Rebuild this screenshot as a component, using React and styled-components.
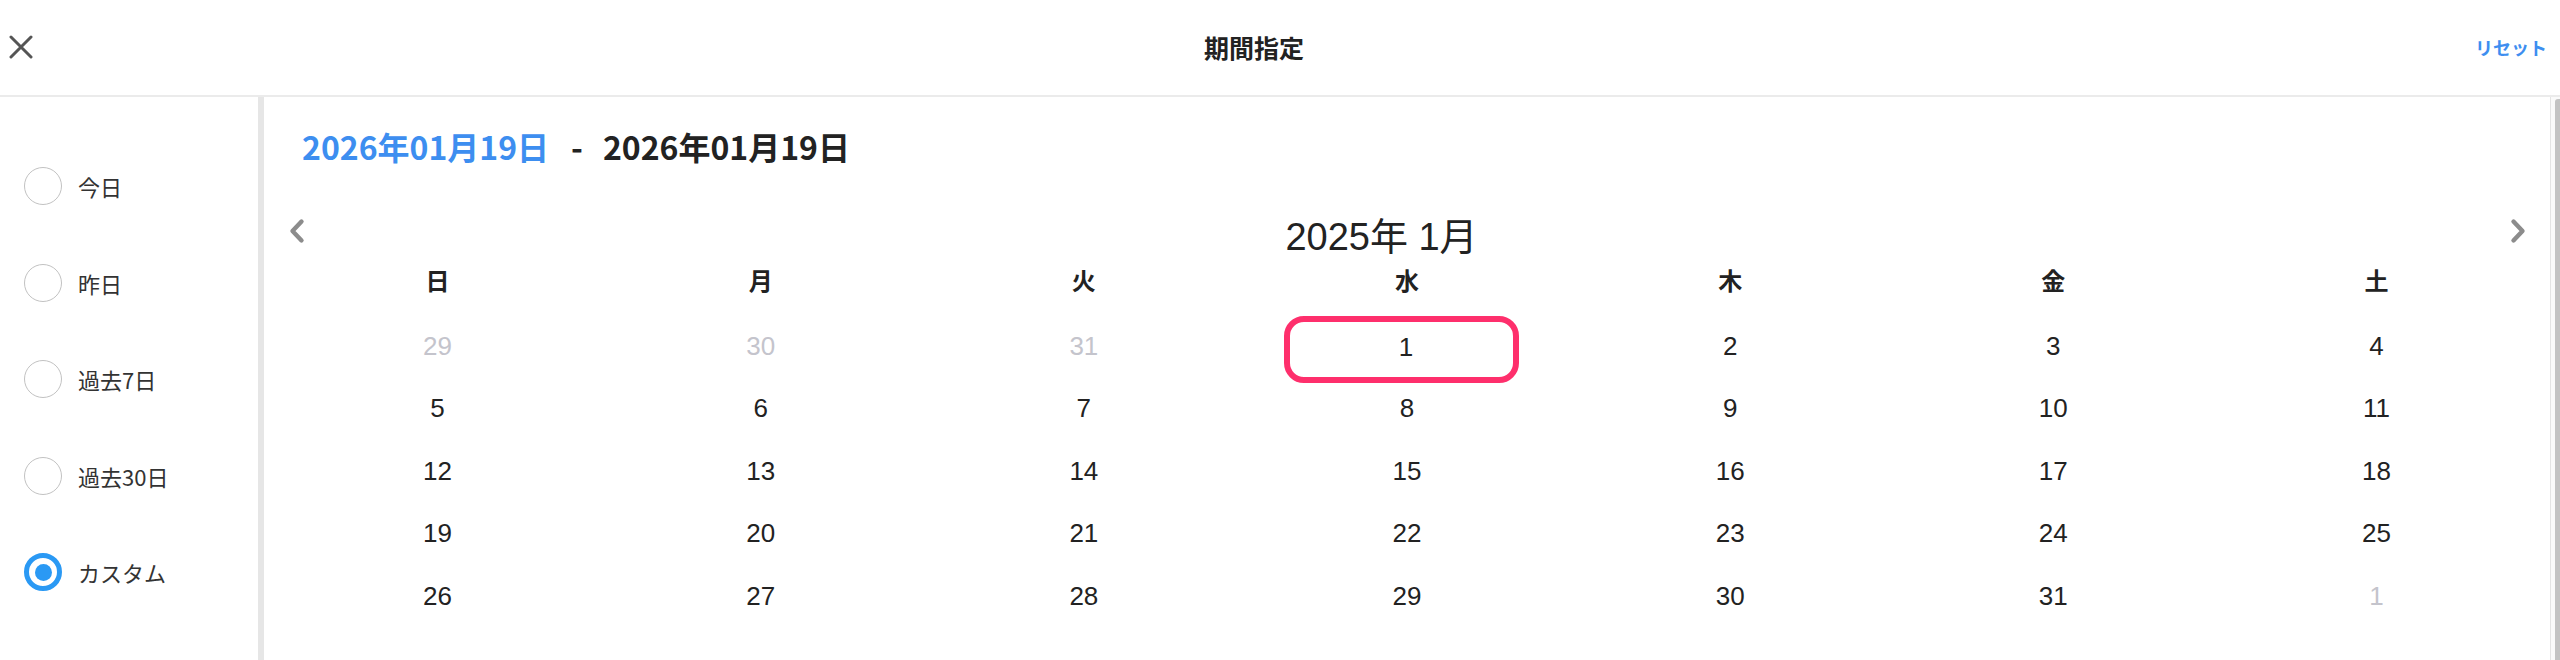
import React from "react";
import styled, { createGlobalStyle } from "styled-components";

const presets = ["今日", "昨日", "過去7日", "過去30日", "カスタム"];
const weekdays = ["日", "月", "火", "水", "木", "金", "土"];

// 2025年1月 — 5 weeks starting Sun 2024/12/29
const days = [
  ...[29, 30, 31].map((d) => ({ day: d, muted: true })),
  ...Array.from({ length: 31 }, (_, i) => ({ day: i + 1, marked: i === 0 })),
  { day: 1, muted: true },
];

function App() {
  return (
    <>
      <GlobalStyle />
      <Page>
        <Header>
          <CloseButton aria-label="閉じる">
            <svg width="24" height="24" viewBox="0 0 24 24">
              <path d="M2 2L22 22M22 2L2 22" stroke="#555" strokeWidth="3" strokeLinecap="round" />
            </svg>
          </CloseButton>
          <Title>期間指定</Title>
          <ResetButton>リセット</ResetButton>
        </Header>
        <Main>
          <Sidebar>
            {presets.map((label, i) => (
              <Option key={label}>
                <Radio $checked={i === presets.length - 1} />
                <OptionLabel>{label}</OptionLabel>
              </Option>
            ))}
          </Sidebar>
          <Panel>
            <Content>
              <Range>
                <RangeDate $active>2026年01月19日</RangeDate>
                <Dash>-</Dash>
                <RangeDate>2026年01月19日</RangeDate>
              </Range>
              <Calendar>
                <Nav>
                  <Arrow aria-label="前の月">
                    <svg width="16" height="26" viewBox="0 0 16 26">
                      <path d="M12.5 3.5L3.5 13L12.5 22.5" fill="none" stroke="#8c8c8c" strokeWidth="4.4" strokeLinecap="round" strokeLinejoin="round" />
                    </svg>
                  </Arrow>
                  <MonthTitle>2025年 1月</MonthTitle>
                  <Arrow aria-label="次の月">
                    <svg width="16" height="26" viewBox="0 0 16 26">
                      <path d="M3.5 3.5L12.5 13L3.5 22.5" fill="none" stroke="#8c8c8c" strokeWidth="4.4" strokeLinecap="round" strokeLinejoin="round" />
                    </svg>
                  </Arrow>
                </Nav>
                <Weekdays>
                  {weekdays.map((w) => (
                    <Weekday key={w}>{w}</Weekday>
                  ))}
                </Weekdays>
                <Days>
                  {days.map((d, i) => (
                    <DayCell key={i}>
                      <Day $muted={d.muted} $marked={d.marked}>
                        {d.day}
                      </Day>
                    </DayCell>
                  ))}
                </Days>
              </Calendar>
            </Content>
            <ScrollBar>
              <Thumb />
            </ScrollBar>
          </Panel>
        </Main>
      </Page>
    </>
  );
}

export default App;

const GlobalStyle = createGlobalStyle`
  html, body {
    margin: 0;
    height: 660px;
    overflow: hidden;
    background: #fff;
    font-family: "Noto Sans CJK JP", "Noto Sans", sans-serif;
    color: #222;
  }
  * { box-sizing: border-box; }
`;

const Page = styled.div`
  height: 660px;
  display: flex;
  flex-direction: column;
`;
//
const Header = styled.header`
  height: 97px;
  flex: none;
  display: flex;
  align-items: center;
  padding: 0 13px 2px 9px;
  border-bottom: 2px solid #ebebeb;
`;
//
const CloseButton = styled.button`
  border: 0;
  padding: 0;
  background: none;
  width: 24px;
  height: 24px;
  display: flex;
`;
//
const Title = styled.h1`
  flex: 1;
  margin: 0;
  text-align: center;
  font-size: 25px;
  font-weight: 700;
  color: #222;
`;
//
const ResetButton = styled.button`
  border: 0;
  padding: 0;
  background: none;
  font-family: inherit;
  font-size: 18px;
  font-weight: 700;
  color: #3d8ef0;
`;
//
const Main = styled.div`
  flex: 1;
  min-height: 0;
  display: flex;
`;
//
const Sidebar = styled.aside`
  width: 264px;
  flex: none;
  border-right: 6px solid #e6e6e6;
  padding: 41px 0 0 24px;
`;
//
const Option = styled.label`
  height: 96.5px;
  display: flex;
  align-items: center;
  gap: 16px;
`;
//
const Radio = styled.span`
  width: 38px;
  height: 38px;
  border-radius: 50%;
  border: ${(p) => (p.$checked ? "5px solid #2a99f4" : "1.5px solid #c2c2c2")};
  display: flex;
  align-items: center;
  justify-content: center;
  &::after {
    content: "";
    display: ${(p) => (p.$checked ? "block" : "none")};
    width: 17px;
    height: 17px;
    border-radius: 50%;
    background: #2a99f4;
  }
`;
//
const OptionLabel = styled.span`
  font-size: 22px;
  color: #333;
`;
//
const Panel = styled.section`
  flex: 1;
  min-width: 0;
  display: flex;
  overflow: hidden;
`;
//
const Content = styled.div`
  flex: 1;
  min-width: 0;
`;
//
const ScrollBar = styled.div`
  width: 10px;
  flex: none;
  background: #fafafa;
  border-left: 1px solid #e4e4e4;
  padding: 2px 0 0 4px;
  display: flex;
`;
//
const Thumb = styled.div`
  flex: 1;
  background: #c3c3c3;
  border-radius: 3px 0 0 0;
`;
//
const Range = styled.div`
  padding: 30px 0 0 38px;
  display: flex;
  align-items: center;
  font-size: 32px;
  line-height: 38px;
  font-weight: 700;
`;
//
const RangeDate = styled.span`
  color: ${(p) => (p.$active ? "#3d8ef0" : "#222")};
`;
//
const Dash = styled.span`
  margin: 0 20px 0 22px;
  color: #222;
`;
//
const Calendar = styled.div`
  padding: 46px 12px 40px;
`;
//
const Nav = styled.div`
  height: 40px;
  display: flex;
  align-items: center;
  padding: 0 12px 0 13px;
`;
//
const Arrow = styled.button`
  border: 0;
  padding: 0;
  background: none;
  display: flex;
`;
//
const MonthTitle = styled.h2`
  flex: 1;
  margin: 0;
  padding: 4px 52px 0 0;
  text-align: center;
  font-family: "Liberation Sans", "Noto Sans CJK JP", sans-serif;
  font-size: 38px;
  font-weight: 400;
  color: #222;
`;
//
const Weekdays = styled.div`
  margin-top: 8px;
  height: 40px;
  display: grid;
  grid-template-columns: repeat(7, 1fr);
  align-items: center;
`;
//
const Weekday = styled.div`
  text-align: center;
  font-size: 24px;
  font-weight: 700;
  color: #222;
`;
//
const Days = styled.div`
  margin-top: 15.75px;
  display: grid;
  grid-template-columns: repeat(7, 1fr);
  grid-auto-rows: 62.5px;
`;
//
const DayCell = styled.div`
  display: flex;
  align-items: center;
  justify-content: center;
`;
//
const Day = styled.span`
  display: flex;
  align-items: center;
  justify-content: center;
  font-family: "Liberation Sans", "Noto Sans CJK JP", sans-serif;
  font-size: 26px;
  color: ${(p) => (p.$muted ? "#c4c4cc" : "#222")};
  ${(p) =>
    p.$marked &&
    `
    width: 235px;
    height: 67px;
    margin: 0 10px 0 0;
    padding: 0 0 4px 8px;
    transform: translateY(3px);
    border: 6px solid #fe2f6c;
    border-radius: 20px;
  `}
`;
